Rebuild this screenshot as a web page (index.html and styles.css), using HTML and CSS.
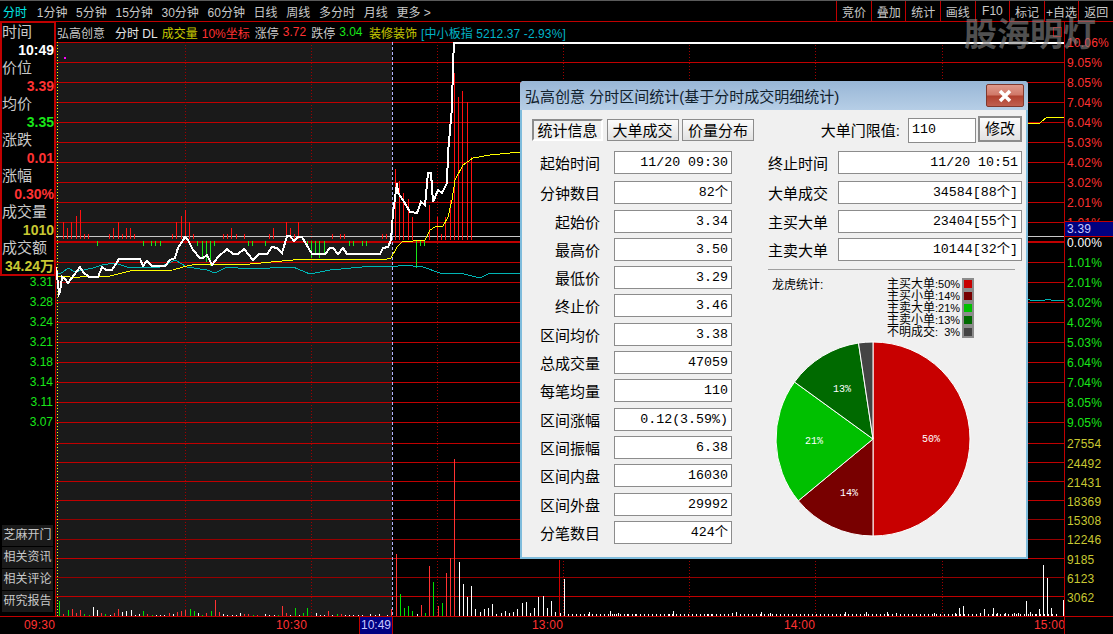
FILE: index.html
```html
<!DOCTYPE html>
<html>
<head>
<meta charset="UTF-8">
<title>分时区间统计</title>
<link rel="stylesheet" href="styles.css">
</head>
<body>

<div class="toolbar">
<span class="tool on">分时</span>
<span class="tool">1分钟</span>
<span class="tool">5分钟</span>
<span class="tool">15分钟</span>
<span class="tool">30分钟</span>
<span class="tool">60分钟</span>
<span class="tool">日线</span>
<span class="tool">周线</span>
<span class="tool">多分时</span>
<span class="tool">月线</span>
<span class="tool">更多 &gt;</span>
<div class="toolbtns">
<span>竞价</span><span>叠加</span><span>统计</span><span>画线</span><span>F10</span><span>标记</span><span>+自选</span><span>返回</span>
</div>
</div>

<div class="main">

<div class="side">
<div class="quote">
<div class="q-label">时间</div><div class="q-val white">10:49</div>
<div class="q-label">价位</div><div class="q-val red">3.39</div>
<div class="q-label">均价</div><div class="q-val green">3.35</div>
<div class="q-label">涨跌</div><div class="q-val red">0.01</div>
<div class="q-label">涨幅</div><div class="q-val red">0.30%</div>
<div class="q-label">成交量</div><div class="q-val yellow">1010</div>
<div class="q-label">成交额</div><div class="q-val yellow">34.24万</div>
</div>
<div class="prices">
<span>3.31</span><span>3.28</span><span>3.24</span><span>3.21</span><span>3.18</span><span>3.14</span><span>3.11</span><span>3.07</span>
</div>
<div class="sidebtns">
<span>芝麻开门</span><span>相关资讯</span><span>相关评论</span><span>研究报告</span>
</div>
</div>

<div class="chartcol">
<div class="info">
<span class="gray">弘高创意</span>
<span class="white-t">分时 DL</span>
<span class="yellow-t">成交量</span>
<span class="red-t">10%坐标</span>
<span class="gray">涨停</span>
<span class="red-t">3.72</span>
<span class="gray">跌停</span>
<span class="green-t">3.04</span>
<span class="yellow-t sector">装修装饰</span>
<span class="cyan-t">[中小板指 5212.37 -2.93%]</span>
<span class="mark"></span>
</div>
<svg class="chart" width="1008" height="574" viewBox="56 42 1008 574">
<rect class="shade" x="56" y="42" width="336" height="574"/>
<path class="grid" d="M56 42.5H1064M56 62.5H1064M56 82.5H1064M56 102.5H1064M56 122.5H1064M56 142.5H1064M56 162.5H1064M56 182.5H1064M56 202.5H1064M56 222.5H1064M56 262.5H1064M56 282.5H1064M56 302.5H1064M56 322.5H1064M56 342.5H1064M56 362.5H1064M56 382.5H1064M56 402.5H1064M56 422.5H1064M56 443.5H1064M56 462.5H1064M56 481.5H1064M56 500.5H1064M56 558.5H1064M56 596.5H1064"/>
<path class="grid-dim" d="M56 519.5H1064M56 539.5H1064M56 577.5H1064"/>
<path class="grid-mid" d="M56 242H1064"/>
<path class="close-line" d="M56 236.5H1064"/>
<path class="dots" d="M185.5 42V616M311.5 42V616M437.5 42V616M563.5 42V616M689.5 42V616M815.5 42V616M942.5 42V616"/>
<path class="dots-y" d="M57.5 42V616"/>
<path class="dots-b" d="M392.5 42V616"/>
<path class="tall" d="M559.5 560V616"/>
<rect class="dot-m" x="64" y="57" width="2" height="2"/>

<path class="bar-r" d="M63.5 222V239M67.5 228V239M71.5 222V239M76.5 216V239M80.5 210V239M84.5 234V239M88.5 234V239M109.5 234V239M113.5 228V239M118.5 222V239M122.5 234V239M126.5 228V239M130.5 228V239M134.5 234V239M172.5 234V239M176.5 222V239M181.5 216V239M185.5 210V239M189.5 222V239M193.5 234V239M223.5 234V239M227.5 234V239M231.5 228V239M236.5 234V239M244.5 234V239M269.5 234V239M273.5 228V239M286.5 222V239M290.5 228V239M294.5 234V239M298.5 222V239M332.5 234V239M340.5 234V239M344.5 234V239M382.5 234V239M386.5 234V239"/>
<path class="bar-r" d="M391.5 222V240M395.5 169V240M399.5 181V240M403.5 193V240M408.5 199V240M412.5 217V240M429.5 205V240M437.5 217V240M441.5 234V240M445.5 217V240M450.5 200V240M454.5 73V240M458.5 97V240M462.5 91V240M467.5 102V240M471.5 157V240"/>
<path class="bar-g" d="M97.5 241V246M143.5 241V246M151.5 241V246M155.5 241V246M160.5 241V246M197.5 241V246M202.5 241V258M206.5 241V262M210.5 241V266M214.5 241V246M248.5 241V246M252.5 241V246M265.5 241V246M307.5 241V246M311.5 241V258M315.5 241V254M319.5 241V258M324.5 241V254M349.5 241V246M353.5 241V246M362.5 241V246M366.5 241V246M416.5 241V268M420.5 241V246M424.5 241V246"/>

<polyline class="avg-c" points="56,275 63,272 68,268 75,272 93,268 102,265 115,263 130,268 160,267 175,260 187,267 207,270 215,273 227,267 248,269 293,267 310,274 330,270 373,266 393,267 403,265 423,267 440,273 460,273 480,278 490,273 520,273 1030,300 1045,300 1046,299 1050,299 1051,300 1064,300"/>
<polyline class="avg-y" points="56,276 70,277 80,277 110,276 130,271 173,270 187,266 197,264 250,264 293,260 305,259 387,259 391,258 397,247 402,242 413,241 425,240 430,230 435,227 443,226 448,217 452,200 455,180 463,165 473,158 490,155 520,152 1029,123 1040,123 1047,117 1064,117"/>
<polyline class="price" points="56,267 57,275 59,294 60,292 62,277 65,279 68,283 74,275 80,267 83,272 89,277 98,277 102,267 106,270 112,270 119,259 140,259 143,266 147,261 152,266 165,266 170,260 175,258 178,248 185,237 188,240 193,250 200,258 203,258 207,255 212,265 218,257 227,249 233,254 238,254 244,249 253,260 259,254 267,254 272,247 277,248 282,253 287,236 290,236 294,241 298,237 302,237 312,254 325,254 330,248 333,248 338,254 343,248 347,254 380,254 383,248 388,247 391,240 393,213 397,183 398,193 403,200 410,212 417,213 421,202 425,205 428,173 431,173 433,202 438,190 442,193 447,183 448,153 450,130 452,108 453,63 454,43 1064,43"/>

<path class="vol-r" d="M63.5 614V616M72.5 609V616M76.5 613V616M80.5 610V616M101.5 613V616M114.5 613V616M118.5 609V616M147.5 614V616M169.5 613V616M177.5 612V616M181.5 611V616M185.5 610V616M206.5 613V616M215.5 600V616M219.5 612V616M244.5 614V616M248.5 614V616M257.5 615V616M282.5 606V616M286.5 613V616M328.5 611V616M341.5 614V616M391.5 609V616M396.5 554V616M421.5 605V616M429.5 566V616M438.5 606V616M446.5 573V616M450.5 558V616M454.5 459V616"/>
<path class="vol-g" d="M59.5 601V616M68.5 610V616M84.5 614V616M89.5 615V616M105.5 614V616M143.5 611V616M152.5 615V616M190.5 609V616M194.5 611V616M202.5 615V616M211.5 611V616M253.5 615V616M278.5 615V616M295.5 608V616M303.5 613V616M307.5 608V616M337.5 614V616M400.5 594V616M404.5 608V616M408.5 606V616M412.5 611V616M425.5 613V616M433.5 582V616M442.5 603V616"/>
<path class="vol-w" d="M93.5 607V616M97.5 610V616M110.5 615V616M122.5 612V616M126.5 611V616M131.5 610V616M135.5 615V616M139.5 614V616M156.5 615V616M160.5 615V616M164.5 615V616M173.5 614V616M198.5 613V616M223.5 614V616M227.5 615V616M232.5 615V616M236.5 615V616M240.5 613V616M265.5 614V616M269.5 615V616M274.5 615V616M290.5 615V616M299.5 615V616M316.5 613V616M320.5 615V616M324.5 615V616M332.5 615V616M345.5 615V616M349.5 615V616M353.5 615V616M358.5 615V616M362.5 615V616M370.5 614V616M375.5 615V616M379.5 614V616M387.5 615V616M417.5 614V616M459.5 562V616M463.5 584V616M467.5 597V616M471.5 586V616M475.5 609V616M480.5 612V616M484.5 609V616M488.5 608V616M492.5 604V616M496.5 614V616M501.5 613V616M505.5 611V616M509.5 613V616M513.5 612V616M517.5 609V616"/>
<path class="vol-w" d="M522.5 603V616M526.5 602V616M530.5 613V616M534.5 608V616M538.5 597V616M543.5 596V616M547.5 608V616M551.5 601V616M555.5 612V616M560.5 613V616M564.5 579V616M589.5 612V616M610.5 611V616M614.5 614V616M618.5 613V616M627.5 614V616M635.5 614V616M669.5 614V616M673.5 611V616M707.5 614V616M711.5 614V616M732.5 613V616M736.5 612V616M761.5 612V616M770.5 613V616M845.5 612V616M866.5 612V616M887.5 612V616M896.5 613V616M934.5 613V616M955.5 613V616M959.5 608V616M963.5 606V616M980.5 613V616M984.5 609V616M988.5 614V616M993.5 608V616M997.5 613V616M1005.5 613V616M1014.5 613V616M1018.5 613V616M1026.5 601V616M1030.5 612V616M1035.5 614V616M1039.5 609V616M1043.5 565V616M1047.5 578V616M1051.5 608V616M1056.5 615V616M1063.5 600V616"/>
<path class="vol-low" d="M568 615H1060"/>
</svg>
</div>

<div class="axis">
<div class="pct up">10.06%</div>
<div class="pct up">9.05%</div>
<div class="pct up">8.05%</div>
<div class="pct up">7.04%</div>
<div class="pct up">6.04%</div>
<div class="pct up">5.03%</div>
<div class="pct up">4.02%</div>
<div class="pct up">3.02%</div>
<div class="pct up">2.01%</div>
<div class="pct up">1.01%</div>
<div class="pct zero">0.00%</div>
<div class="pct down">1.01%</div>
<div class="pct down">2.01%</div>
<div class="pct down">3.02%</div>
<div class="pct down">4.02%</div>
<div class="pct down">5.03%</div>
<div class="pct down">6.04%</div>
<div class="pct down">7.04%</div>
<div class="pct down">8.05%</div>
<div class="pct down">9.05%</div>
<div class="vols">
<div>27554</div><div>24492</div><div>21431</div><div>18369</div><div>15308</div><div>12246</div><div>9185</div><div>6123</div><div>3062</div>
</div>
<div class="curprice">3.39</div>
</div>

</div>

<div class="timeaxis">
<span class="t t-0930">09:30</span>
<span class="t t-1030">10:30</span>
<span class="t-cursor">10:49</span>
<span class="t t-1300">13:00</span>
<span class="t t-1400">14:00</span>
<span class="t t-1500">15:00</span>
<span class="t-edge"></span>
</div>

<div class="watermark">股海明灯</div>

<!-- stats dialog -->
<div class="dialog">
<div class="titlebar">
<span>弘高创意 分时区间统计(基于分时成交明细统计)</span>
<span class="closebtn"><svg width="18" height="14" viewBox="0 0 18 14"><path d="M4 2L14 12M14 2L4 12"/></svg></span>
</div>
<div class="dlgbody">

<div class="toprow">
<div class="tabs">
<span class="tab active">统计信息</span>
<span class="tab">大单成交</span>
<span class="tab">价量分布</span>
</div>
<div class="limit">
<span>大单门限值:</span>
<span class="limit-input">110</span>
<span class="editbtn">修改</span>
</div>
</div>

<div class="cols">
<div class="col-left">
<div class="row"><label>起始时间</label><span class="field">11/20 09:30</span></div>
<div class="row"><label>分钟数目</label><span class="field">82个</span></div>
<div class="row"><label>起始价</label><span class="field">3.34</span></div>
<div class="row"><label>最高价</label><span class="field">3.50</span></div>
<div class="row"><label>最低价</label><span class="field">3.29</span></div>
<div class="row"><label>终止价</label><span class="field">3.46</span></div>
<div class="row"><label>区间均价</label><span class="field">3.38</span></div>
<div class="row"><label>总成交量</label><span class="field">47059</span></div>
<div class="row"><label>每笔均量</label><span class="field">110</span></div>
<div class="row"><label>区间涨幅</label><span class="field">0.12(3.59%)</span></div>
<div class="row"><label>区间振幅</label><span class="field">6.38</span></div>
<div class="row"><label>区间内盘</label><span class="field">16030</span></div>
<div class="row"><label>区间外盘</label><span class="field">29992</span></div>
<div class="row"><label>分笔数目</label><span class="field">424个</span></div>
</div>

<div class="col-right">
<div class="row"><label>终止时间</label><span class="field">11/20 10:51</span></div>
<div class="row"><label>大单成交</label><span class="field">34584[88个]</span></div>
<div class="row"><label>主买大单</label><span class="field">23404[55个]</span></div>
<div class="row"><label>主卖大单</label><span class="field">10144[32个]</span></div>
<div class="sep"></div>
<div class="lh">
<div class="lh-title">龙虎统计:</div>
<div class="legend">
<div class="leg">主买大单<span class="lp">:50%</span><i class="sw sw-1"></i></div>
<div class="leg">主买小单<span class="lp">:14%</span><i class="sw sw-2"></i></div>
<div class="leg">主卖大单<span class="lp">:21%</span><i class="sw sw-3"></i></div>
<div class="leg">主卖小单<span class="lp">:13%</span><i class="sw sw-4"></i></div>
<div class="leg">不明成交<span class="lp">:  3%</span><i class="sw sw-5"></i></div>
</div>
</div>
<svg class="pie" width="196" height="196" viewBox="775 340 196 196">
<path class="s1" d="M873 438L873 341A97 97 0 0 1 873 535Z"/>
<path class="s2" d="M873 438L873 535A97 97 0 0 1 798.3 499.8Z"/>
<path class="s3" d="M873 438L798.3 499.8A97 97 0 0 1 794.5 381Z"/>
<path class="s4" d="M873 438L794.5 381A97 97 0 0 1 858.5 342Z"/>
<path class="s5" d="M873 438L858.5 342A97 97 0 0 1 873 341Z"/>
<text x="931" y="441">50%</text>
<text x="849" y="495">14%</text>
<text x="814" y="443">21%</text>
<text x="842" y="391">13%</text>
</svg>
</div>
</div>

</div>
</div>

</body>
</html>
```
FILE: styles.css
```css
*{
box-sizing: border-box;
margin:0; padding:0;
}

html,body{
width: 1113px;
height: 634px;
overflow: hidden;
background: #000;
}

body{
position: relative;
font: 12px "Liberation Sans","Noto Sans CJK SC",sans-serif;
color: #c8c8c8;
}

/* top bar */
.toolbar{
height: 22px;
display: flex;
align-items: center;
gap: 8.7px;
padding-left: 3px;
border-top: 1px solid #5a5a5a;
border-bottom: 1px solid #c00000;
}

.tool.on{
color: #00e6e6;
margin-right: 1px;
}

.toolbtns{
margin-left: auto;
display: flex;
align-self: stretch;
}

.toolbtns span{
width: 34.6px;
display: flex;
align-items: center;
justify-content: center;
border-left: 1px solid #c00000;
}

/* main area */
.main{
height: 594px;
display: flex;
}

.side{
width: 55px;
display: flex;
flex-direction: column;
padding-bottom: 4px;
}

.quote{
height: 254px;
border: 2px solid #c00000;
border-top-width: 1px;
border-right-width: 1px;
}

.q-label{
height: 18px;
line-height: 18px;
font-size: 15px;
white-space: nowrap;
}

.q-val{
height: 18px;
line-height: 18px;
font-size: 14px;
font-weight: bold;
text-align: right;
white-space: nowrap;
}

.white{color: #fff;}
.red{color: #ff3232;}
.green{color: #19e619;}
.yellow{color: #c8c832;}

.prices{
display: flex;
flex-direction: column;
gap: 8px;
align-items: flex-end;
padding-right: 2px;
color: #19e619;
line-height: 12px;
}

.sidebtns{
margin-top: auto;
display: flex;
flex-direction: column;
gap: 1px;
padding-left: 2px;
padding-right: 2px;
}

.sidebtns span{
height: 21px;
line-height: 20px;
background: #1a1a1a;
text-align: center;
white-space: nowrap;
}

.chartcol{
width: 1010px;
border-left: 1px solid #c00000;
border-right: 1px solid #c00000;
}

.info{
height: 20px;
display: flex;
align-items: center;
gap: 4px;
padding-left: 1px;
white-space: nowrap;
}

.gray{color: #c8c8c8;}
.white-t{color: #e6e6e6; margin-left: 6px;}
.yellow-t{color: #c8c800;}
.red-t{color: #ff3232;}
.green-t{color: #19e619;}
.cyan-t{color: #00b4c8; letter-spacing: .1px;}
.red-t + .gray{margin-left: 1px;}
.sector{margin-left: 2.5px;}

.mark{
margin-left: auto;
margin-right: 2px;
width: 9px;
height: 10px;
border: 1px solid #c00000;
}

.chart{
display: block;
shape-rendering: crispEdges;
}

.shade{fill: #1a1a1a;}
.grid{stroke: #c00000; fill: none;}
.grid-dim{stroke: #960000; fill: none;}
.grid-mid{stroke: #c00000; stroke-width: 2; fill: none;}
.close-line{stroke: #c8c8c8; fill: none;}
.dots{stroke: #a00000; stroke-dasharray: 1 2; fill: none;}
.dots-y{stroke: #ffff00; stroke-dasharray: 1 2; fill: none;}
.dots-b{stroke: #b4b4ff; stroke-dasharray: 3 2; fill: none;}
.tall{stroke: #d00000; fill: none;}
.dot-m{fill: #ff00ff;}
.bar-r{stroke: #ff1010; fill: none;}
.bar-g{stroke: #19e619; fill: none;}
.vol-r{stroke: #ff3232; fill: none;}
.vol-g{stroke: #00e000; fill: none;}
.vol-w{stroke: #fff; fill: none;}
.vol-low{stroke: #fff; stroke-width: 2; stroke-dasharray: 1 3; fill: none;}
.avg-c{stroke: #00b4b4; fill: none;}
.avg-y{stroke: #ffff00; fill: none;}
.price{stroke: #fff; stroke-width: 2; fill: none;}

/* right scale */
.axis{
position: relative;
width: 48px;
padding-top: 11px;
padding-left: 2px;
white-space: nowrap;
letter-spacing: .2px;
}

.pct{
height: 20px;
line-height: 20px;
}

.up{color: #ff3232;}
.zero{color: #fff;}
.down{color: #19e619;}

.vols{
margin-top: 2.4px;
color: #c8c832;
}

.vols div{
height: 19.2px;
line-height: 19.2px;
}

.curprice{
position: absolute;
top: 199px;
left: 0;
width: 48px;
height: 16px;
line-height: 14px;
padding-left: 2px;
background: #000080;
color: #c8c8ff;
border-top: 1px solid #c00000;
border-bottom: 1px solid #c00000;
}

/* time scale */
.timeaxis{
position: relative;
height: 18px;
border-top: 1px solid #c00000;
line-height: 17px;
}

.t{
position: absolute;
top: 0;
color: #ff3232;
letter-spacing: .2px;
}

.t-0930{left: 24px;}
.t-1030{left: 276px;}
.t-1300{left: 532px;}
.t-1400{left: 784px;}
.t-1500{left: 1034px;}

.t-cursor{
position: absolute;
left: 359px;
top: 0;
width: 34px;
height: 17px;
text-align: center;
background: #000080;
color: #c8c8ff;
border-left: 1px solid #c00000;
border-right: 1px solid #c00000;
}

.t-edge{
position: absolute;
left: 1064px;
top: 0;
height: 17px;
border-left: 1px solid #c00000;
}

.watermark{
position: absolute;
left: 964px;
top: 11px;
font-size: 33px;
line-height: 48px;
font-weight: bold;
color: rgba(135,135,135,.6);
white-space: nowrap;
}

/* dialog over the chart */
.dialog{
position: absolute;
left: 520px;
top: 81px;
width: 508px;
height: 478px;
background: #f0f0f0;
border: 2px solid #7fbcdc;
border-top: 0;
border-radius: 4px 4px 0 0;
font-size: 15px;
color: #000;
}

.titlebar{
height: 29px;
margin: 0 -2px;
padding-left: 5px;
display: flex;
align-items: center;
justify-content: space-between;
background: linear-gradient(#98b6d6,#b6cee6);
border-radius: 4px 4px 0 0;
color: #10202c;
white-space: nowrap;
}

.closebtn{
width: 38px;
height: 23px;
margin-right: 4px;
display: flex;
align-items: center;
justify-content: center;
border: 1px solid #80382c;
border-radius: 2px;
background: linear-gradient(#e09a8c 0%,#d07868 48%,#b0402e 52%,#c06050 100%);
}

.closebtn path{
stroke: #fff;
stroke-width: 3.5;
fill: none;
}

.dlgbody{
padding: 6px 4px 0 4px;
}

.toprow{
height: 27px;
margin-bottom: 8px;
display: flex;
justify-content: space-between;
}

.tabs{
margin-left: 6px;
display: flex;
gap: 3.5px;
padding-top: 3px;
}

.tab{
width: 72px;
height: 22px;
line-height: 21px;
text-align: center;
white-space: nowrap;
background: linear-gradient(#fcfcfc,#e2e2e2);
border: 1px solid #8c8c8c;
}

.tab.active{
width: 71px;
background: #f0f0f0;
border: 2px solid #fff;
border-left-color: #8c8c8c;
border-top-color: #8c8c8c;
line-height: 19px;
}

.limit{
display: flex;
align-items: flex-start;
white-space: nowrap;
}

.limit > span:first-child{
line-height: 30px;
margin-right: 8px;
}

.limit-input{
width: 68px;
height: 25px;
margin-top: 2px;
margin-right: 2px;
padding-left: 3px;
background: #fff;
border: 1px solid #8c8c8c;
font: 13.3px/22px "Liberation Mono",monospace;
}

.editbtn{
width: 44px;
height: 26px;
line-height: 22px;
text-align: center;
background: linear-gradient(#fcfcfc,#e2e2e2);
border: 2px solid #8c8c8c;
}

.cols{
display: flex;
gap: 36px;
}

.col-left{
width: 206px;
display: flex;
flex-direction: column;
gap: 5.3px;
}

.col-right{
width: 254px;
display: flex;
flex-direction: column;
gap: 5.3px;
}

.row{
height: 23px;
display: flex;
align-items: center;
}

.row:first-child{
margin-bottom: 2px;
}

.row label{
white-space: nowrap;
}

.col-left .row label{
width: 74px;
text-align: right;
margin-right: 14px;
}

.col-right .row label{
width: 70px;
}

.field{
flex: 1;
height: 23px;
padding-right: 3px;
text-align: right;
white-space: nowrap;
background: #fff;
border: 1px solid #8c8c8c;
font: 13.3px/21px "Liberation Mono","Noto Sans CJK SC",monospace;
}

.sep{
width: 247px;
height: 1px;
margin-top: 3px;
background: #a0a0a0;
}

.lh{
display: flex;
margin-top: 3px;
font-size: 12px;
}

.lh-title{
width: 119px;
padding-left: 4px;
white-space: nowrap;
line-height: 14px;
}

.legend{
display: flex;
flex-direction: column;
}

.leg{
height: 12px;
line-height: 12px;
display: flex;
align-items: center;
white-space: nowrap;
}

.lp{
width: 24px;
font: 11px/12px "Liberation Sans",sans-serif;
white-space: pre;
}

.sw{
width: 12px;
height: 12px;
margin-left: 3px;
border: 2px solid #8c8c8c;
}

.sw-1{background: #c80000;}
.sw-2{background: #780000;}
.sw-3{background: #00c000;}
.sw-4{background: #006a00;}
.sw-5{background: #444;}

.pie{
display: block;
margin-top: -3px;
margin-left: 7px;
}

.pie path{
stroke: #fff;
stroke-width: 1;
}

.pie text{
fill: #fff;
font: 10px "Liberation Mono",monospace;
text-anchor: middle;
}

.s1{fill: #c80000;}
.s2{fill: #780000;}
.s3{fill: #00c000;}
.s4{fill: #006a00;}
.s5{fill: #444;}
```
